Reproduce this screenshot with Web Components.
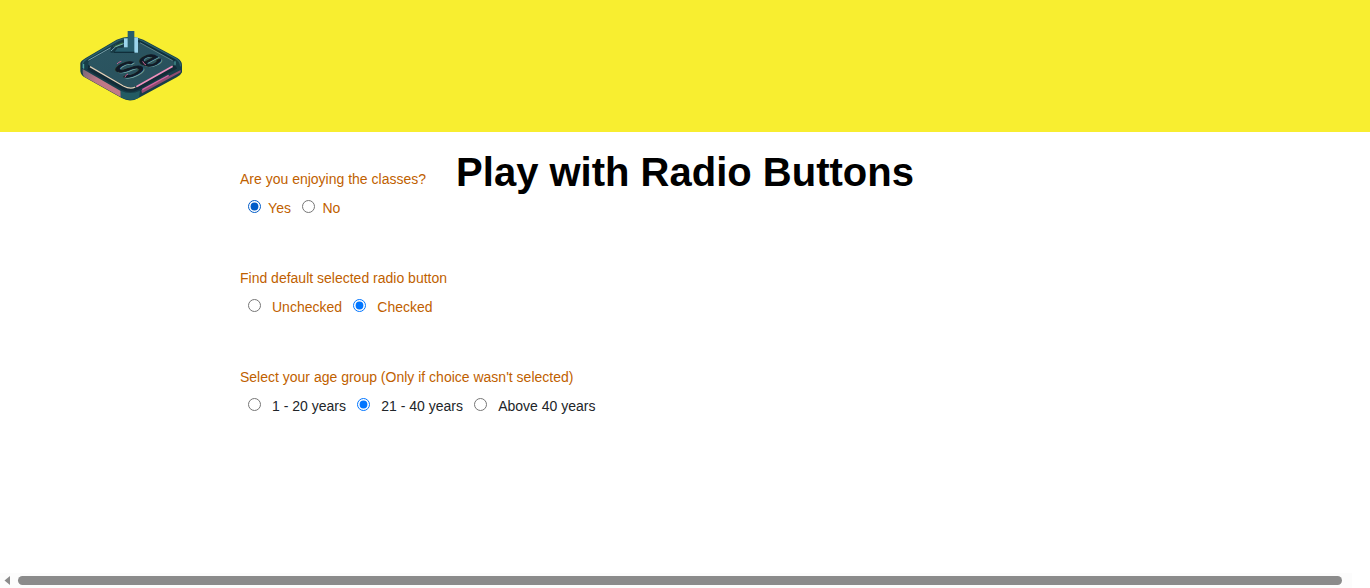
<!DOCTYPE html>
<html lang="en"><head><meta charset="utf-8"><title>Radio Buttons</title>
<style>html,body{margin:0;height:100%;overflow:hidden;background:#fff;font-family:"Liberation Sans",Arial,sans-serif}</style></head>
<body><radio-page></radio-page>
<script>
const define=(name,html,setup)=>customElements.define(name,class extends HTMLElement{
  constructor(){super();this.attachShadow({mode:'open'}).innerHTML=html}
  connectedCallback(){if(setup)setup(this,this.shadowRoot)}
});
define('se-logo',`<style>:host{display:block;width:125px;height:90px}svg{display:block}</style>
<svg width="125" height="90" viewBox="0 0 375 270">
<defs><linearGradient id="l" x1="0" y1="0" x2="1" y2=".5"><stop stop-color="#756777"/><stop offset=".45" stop-color="#bd7787"/><stop offset="1" stop-color="#c27a86"/></linearGradient>
<linearGradient id="t" x1="0" y1="0" x2="1" y2="1"><stop stop-color="#2b5662"/><stop offset="1" stop-color="#29505b"/></linearGradient></defs>
<path d="M31 130Q32 123 47 114L140 59Q180 42 220 59L322 114Q336 122 336 136V157Q333 165 320 172L207 233Q181 249 155 234L44 172Q33 166 31 154Z" fill="#173e49"/>
<path d="M38 147L152 213V231L43 170Q38 165 38 157Z" fill="url(#l)"/>
<path d="M152 212Q181 226 210 212L207 233Q181 248 153 232Z" fill="#235b63"/>
<path d="M214 211L332 150V157L216 220Z" fill="#914c70"/>
<path d="M217 209L296 166" stroke="#d864a2" stroke-width="4"/>
<path d="M38 144V130Q39 123 50 117L144 62Q181 45 218 63L319 117Q331 124 332 139" fill="none" stroke="#2b626a" stroke-width="4"/>
<path d="M54 136V147L163 208Q181 217 202 208L317 144V131Z" fill="#112b36"/>
<path d="M55 128Q57 122 67 117L151 70Q181 53 212 69L304 119Q316 127 312 135L198 198Q181 207 165 198L61 139Q54 135 55 128Z" fill="url(#t)"/>
<path d="M55 121L140 73" stroke="#8fb7c0" stroke-width="2.5"/>
<path d="M205 62L315 121" stroke="#102f3a" stroke-width="5"/>
<path d="M210 68L308 122" stroke="#7c9f9e" stroke-width="2"/>
<path d="M60 140L160 198Q181 209 196 201" fill="none" stroke="#e0d0b8" stroke-width="4"/>
<path d="M199 200L308 139" stroke="#ef92bd" stroke-width="5"/>
<path d="M53 147L160 207Q181 218 202 207L320 143" fill="none" stroke="#132c38" stroke-width="6"/>
<path d="M41 132V146M315 124V136" stroke="#55b3ad" stroke-width="3"/>
<path d="M122 80L161 60V82L141 90L132 98H122Z" fill="#173943"/>
<path d="M128 80L158 67V73L138 80Z" fill="#39733f"/>
<path d="M123 93L137 80L161 71" fill="none" stroke="#a2d9e8" stroke-width="2"/>
<path d="M192 52H204V98H192Z" fill="#9bd5ec"/>
<path d="M173 54V33H193V98H132L143 83H173Z" fill="#285e6c"/>
<path d="M162 55H173V82H162Z" fill="#9bd5ec"/>
<path d="M132 97H193" fill="none" stroke="#102e3a" stroke-width="4"/>
<g font-family="Liberation Sans,Arial,sans-serif" font-weight="400" font-size="78">
<text transform="matrix(1.2 -.64 .85 .55 172 182)" fill="#72a5a3" stroke="#72a5a3" stroke-width="2">Se</text>
<text transform="matrix(1.2 -.64 .85 .55 169 180)" fill="#101a25" stroke="#101a25" stroke-width="3">Se</text></g>
<path d="M141 132Q145 126 154 124M174 162Q165 166 165 172M218 124Q221 132 228 135" stroke="#c66493" stroke-width="3" fill="none"/>
</svg>`);
define('site-header',`<style>:host{display:block;height:112px;padding:20px 70px 0;background:#f8ee30}</style><se-logo></se-logo>`);
define('radio-option',`<style>:host{display:flex;align-items:flex-start;white-space:pre}
input{margin:4px 0 0;width:13px;height:13px;flex:none;accent-color:var(--accent,#0075ff)}label{margin-left:var(--gap,11.4px);line-height:24px}</style><input type="radio"><label><slot></slot></label>`,
(h,r)=>{r.querySelector('input').checked=h.hasAttribute('checked')});
define('radio-question',`<style>:host{display:block;height:99px;font-size:14px;color:#bf5f00}.q{height:29px;line-height:24px}.o{display:flex;padding-left:7.6px;color:var(--option-color,#bf5f00)}</style>
<div class="q"><slot name="question"></slot></div><div class="o"><slot></slot></div>`);
define('page-title',`<style>:host{display:block;text-align:center}h1{margin:0;font-size:40px;line-height:48px;color:#000;white-space:nowrap}</style><h1><slot></slot></h1>`);
define('scroll-bar',`<style>:host{display:flex;align-items:center;box-sizing:border-box;height:15px;padding:0 28px 0 4px;background:linear-gradient(90deg,#fcfcfc 1352px,#fff 1352px)}svg{width:7px;height:9px;margin-right:7px}i{height:9px;border-radius:5px;background:#8b8b8b;flex:1}</style><svg viewBox="0 0 7 9"><path d="M6 0V9L.5 4.5Z" fill="#8b8b8b"/></svg><i></i>`);
define('radio-page',`<style>:host{display:flex;flex-direction:column;height:588px}main{display:grid;flex:1}main>*{grid-area:1/1}.form{padding:35px 0 0 240px}page-title{padding-top:16px}radio-option+radio-option{margin-left:10.9px}
.one{--gap:7.5px}.one radio-option+radio-option{margin-left:11px}.three{--option-color:#212529}</style>
<site-header></site-header><main><page-title>Play with Radio Buttons</page-title><div class="form">
<radio-question class="one"><span slot="question">Are you enjoying the classes?</span><radio-option checked style="--accent:#005cc8">Yes</radio-option><radio-option>No</radio-option></radio-question>
<radio-question><span slot="question">Find default selected radio button</span><radio-option>Unchecked</radio-option><radio-option checked>Checked</radio-option></radio-question>
<radio-question class="three"><span slot="question">Select your age group (Only if choice wasn't selected)</span><radio-option>1 - 20 years</radio-option><radio-option checked>21 - 40 years</radio-option><radio-option>Above 40 years</radio-option></radio-question>
</div></main><scroll-bar></scroll-bar>`);
</script></body></html>
